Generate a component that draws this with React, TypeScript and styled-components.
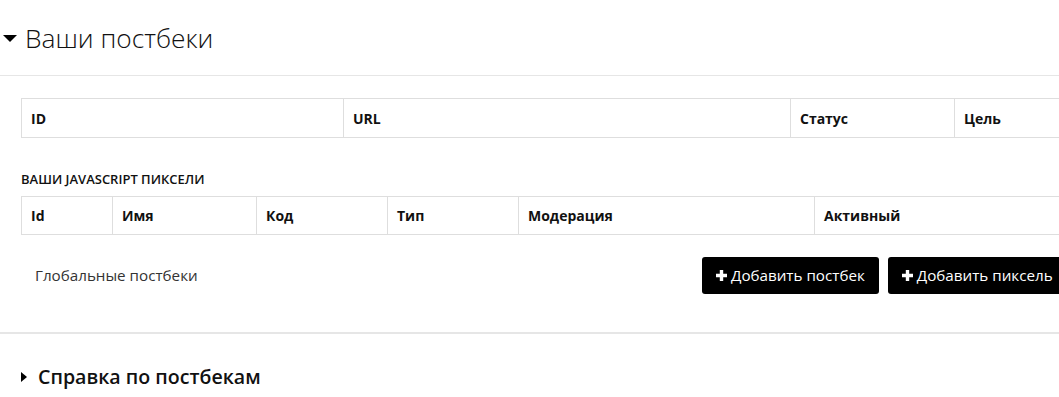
import React from "react";
import styled, { createGlobalStyle } from "styled-components";

const Global = createGlobalStyle`
  html, body { margin: 0; padding: 0; background: #fff; overflow: hidden; }
  body { font-family: "Open Sans", "Liberation Sans", sans-serif; color: #000; }
`;

const Page = styled.div`
  width: 1059px;
  overflow: hidden;
`;

const Header = styled.div`
  display: flex;
  align-items: center;
  height: 76px;
  padding-left: 3px;
  border-bottom: 1px solid #e6e6e6;
  box-sizing: border-box;
`;

const CaretDown = styled.span`
  width: 0;
  height: 0;
  border-left: 7px solid transparent;
  border-right: 7px solid transparent;
  border-top: 7px solid #000;
  margin-right: 8px;
  margin-top: 2px;
`;

const Title = styled.h1`
  margin: 0;
  font-size: 26.3px;
  font-weight: 300;
  color: #111;
  white-space: nowrap;
`;

const Body = styled.div`
  padding: 22px 0 0 21px;
`;

const Table = styled.table`
  border-collapse: collapse;
  width: 1200px;
  table-layout: fixed;
`;

const Th = styled.th<{ $w?: number; $h?: number }>`
  ${(p) => (p.$w ? `width: ${p.$w}px;` : "")}
  border: 1px solid #dedede;
  height: ${(p) => p.$h ?? 39}px;
  padding: 0 9px;
  text-align: left;
  font-size: 14px;
  font-weight: 700;
  color: #111;
  box-sizing: border-box;
`;

const SectionLabel = styled.div`
  margin: 32px 0 7px;
  font-size: 13px;
  font-weight: 600;
  color: #111;
  text-transform: uppercase;
  line-height: 19px;
`;

const ActionRow = styled.div`
  display: flex;
  align-items: center;
  height: 97px;
  padding: 0 0 17px 35px;
  box-sizing: border-box;
`;

const Muted = styled.span`
  font-size: 15.2px;
  color: #333;
  flex: 0 0 auto;
  width: 667px;
`;

const Button = styled.button`
  display: inline-flex;
  align-items: center;
  gap: 4px;
  height: 37px;
  padding: 0 14px;
  margin-right: 9px;
  background: #000;
  color: #fff;
  border: none;
  border-radius: 3px;
  font-family: "Open Sans", "Liberation Sans", sans-serif;
  font-size: 15.2px;
  white-space: nowrap;
  flex: 0 0 auto;
  cursor: pointer;
`;

const Divider = styled.div`
  height: 2px;
  background: #e6e6e6;
`;

const Footer = styled.div`
  display: flex;
  align-items: center;
  padding: 29px 0 0 21px;
`;

const CaretRight = styled.span`
  width: 0;
  height: 0;
  border-top: 5px solid transparent;
  border-bottom: 5px solid transparent;
  border-left: 6px solid #000;
  margin-right: 11px;
`;

const SubTitle = styled.h2`
  margin: 0;
  font-size: 19.6px;
  font-weight: 600;
  color: #111;
`;

const Plus = () => (
  <svg width="11" height="11" viewBox="0 0 11 11" aria-hidden>
    <path d="M3.8 0h3.4v3.8H11v3.4H7.2V11H3.8V7.2H0V3.8h3.8z" fill="#fff" />
  </svg>
);

export default function App() {
  return (
    <Page>
      <Global />
      <Header>
        <CaretDown />
        <Title>Ваши постбеки</Title>
      </Header>
      <Body>
        <Table>
          <thead>
            <tr>
              <Th $w={322}>ID</Th>
              <Th $w={447}>URL</Th>
              <Th $w={164}>Статус</Th>
              <Th>Цель</Th>
            </tr>
          </thead>
        </Table>
        <SectionLabel>Ваши JavaScript пиксели</SectionLabel>
        <Table>
          <thead>
            <tr>
              <Th $w={91} $h={38}>Id</Th>
              <Th $w={144} $h={38}>Имя</Th>
              <Th $w={131} $h={38}>Код</Th>
              <Th $w={131} $h={38}>Тип</Th>
              <Th $w={296} $h={38}>Модерация</Th>
              <Th $h={38}>Активный</Th>
            </tr>
          </thead>
        </Table>
      </Body>
      <ActionRow>
        <Muted>Глобальные постбеки</Muted>
        <Button>
          <Plus />
          Добавить постбек
        </Button>
        <Button>
          <Plus />
          Добавить пиксель
        </Button>
      </ActionRow>
      <Divider />
      <Footer>
        <CaretRight />
        <SubTitle>Справка по постбекам</SubTitle>
      </Footer>
    </Page>
  );
}
